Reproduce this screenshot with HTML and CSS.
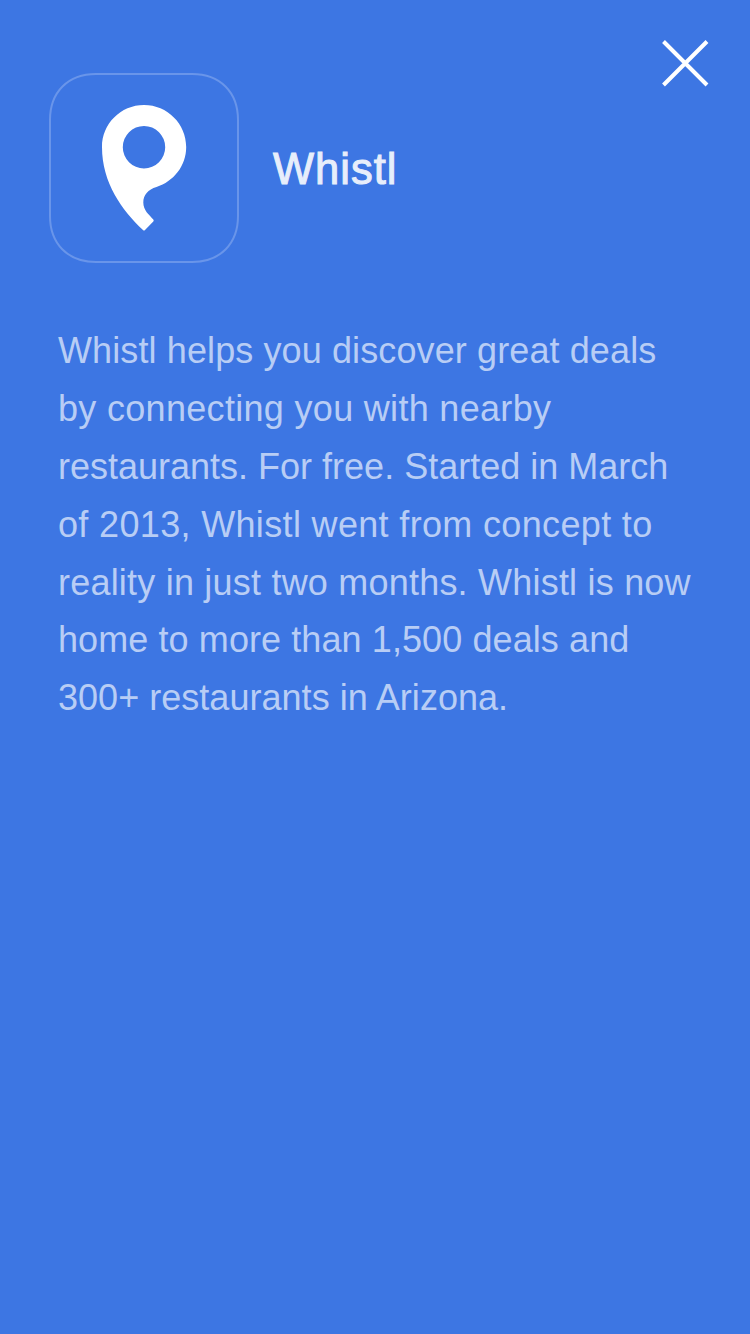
FILE: index.html
```html
<!DOCTYPE html>
<html lang="en">
<head>
<meta charset="utf-8">
<title>Whistl</title>
<link rel="stylesheet" href="styles.css">
</head>
<body>
<main class="about">
  <button class="close" aria-label="Close">
    <svg viewBox="0 0 48 48" width="48" height="48"><path d="M2.500 2.500 46 46M46 2.500 2.500 46"/></svg>
  </button>
  <header class="brand">
    <svg class="logo" viewBox="0 0 190 190" width="190" height="190">
      <path class="frame" d="M47 1H143C171 1 189 19 189 47V143C189 171 171 189 143 189H47C19 189 1 171 1 143V47C1 19 19 1 47 1Z"/>
      <path class="pin" fill-rule="evenodd" d="M53 74C53 51 71.500 32 95 32S137.200 51 137.200 74C137.200 93 124.500 108.500 107.500 114C99 116.500 94.300 122 94.300 129.500C94.300 137.500 100 141.500 104.300 146.500Q105.200 147.500 104.300 148.500L96 157Q95 158 94 157C73 137 53 110 53 74ZM95 53A21.200 21.200 0 1 0 95 95.400A21.200 21.200 0 1 0 95 53Z"/>
    </svg>
    <h1 class="name">Whistl</h1>
  </header>
  <p class="story">
    <span class="line l1">Whistl helps you discover great deals</span>
    <span class="line l2">by connecting you with nearby</span>
    <span class="line l3">restaurants. For free. Started in March</span>
    <span class="line l4">of 2013, Whistl went from concept to</span>
    <span class="line l5">reality in just two months. Whistl is now</span>
    <span class="line l6">home to more than 1,500 deals and</span>
    <span class="line l7">300+ restaurants in Arizona.</span>
  </p>
</main>
</body>
</html>
```
FILE: styles.css
```css
body {
  margin: 0;
  background: #3d76e3;
  font-family: "Liberation Sans", Arial, sans-serif;
}
.about {
  position: relative;
  box-sizing: border-box;
  min-height: 1334px;
  padding: 73px 49px 0;
}
.close {
  position: absolute;
  top: 39px;
  right: 41px;
  padding: 0;
  border: 0;
  background: none;
}
.close svg { display: block; }
.close path {
  fill: none;
  stroke: #fff;
  stroke-width: 4;
}
.brand {
  display: flex;
  align-items: center;
  gap: 34px;
}
.logo { display: block; }
.frame {
  fill: none;
  stroke: #6995ea;
  stroke-width: 2;
}
.pin { fill: #fff; }
.name {
  margin: 2px 0 0;
  font-size: 43.5px;
  line-height: 50px;
  font-weight: 400;
  letter-spacing: 1px;
  color: #e7eefb;
  -webkit-text-stroke: 1px #e7eefb;
}
.story {
  margin: 59.300px 0 0 9px;
  font-size: 36px;
  line-height: 57.830px;
  color: #b8cdf5;
  white-space: nowrap;
}
.line { display: block; }
.l1 { letter-spacing: 0.11px; }
.l2 { letter-spacing: 0.31px; }
.l4 { letter-spacing: 0.34px; }
.l5 { letter-spacing: 0.21px; }
.l6 { letter-spacing: 0.09px; }
.l7 { letter-spacing: 0.03px; }
```
